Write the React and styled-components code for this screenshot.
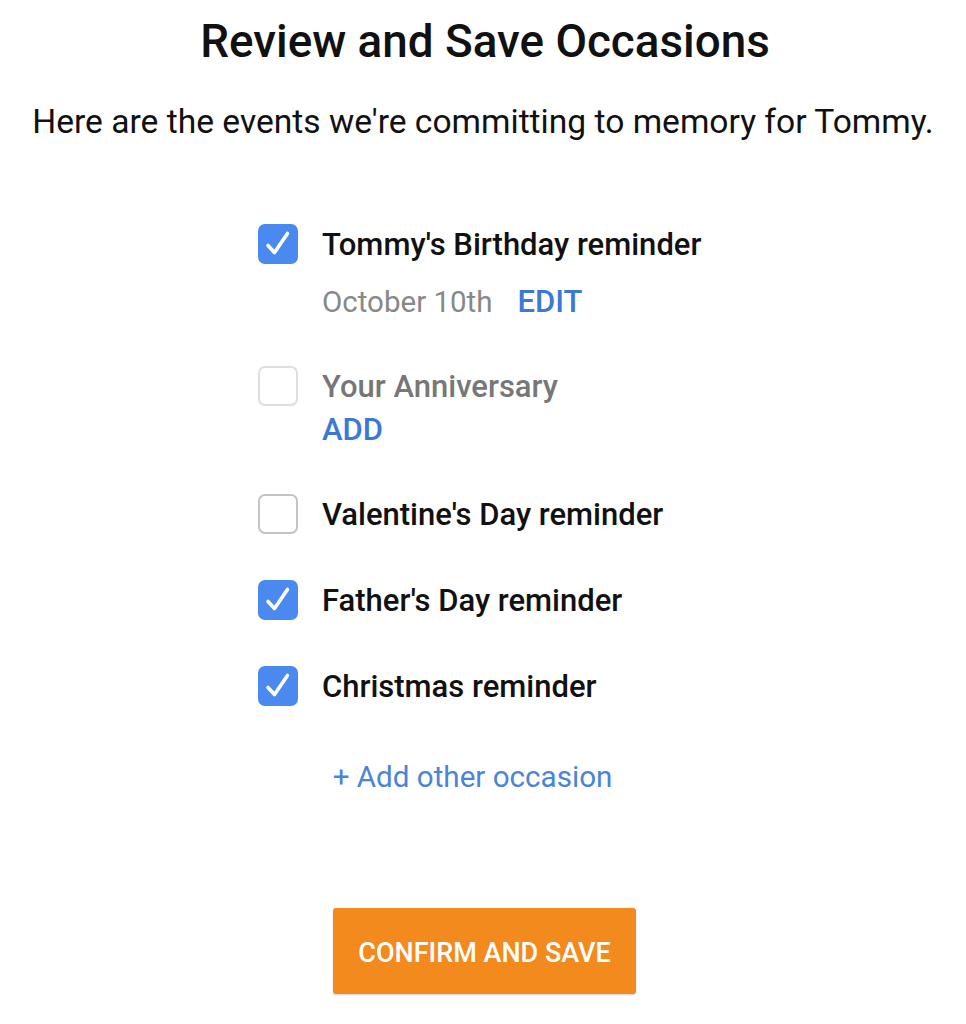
import styled, { createGlobalStyle } from "styled-components";

const GlobalStyle = createGlobalStyle`
  body {
    margin: 0;
    background: #ffffff;
    font-family: Roboto, "Liberation Sans", sans-serif;
    color: #111111;
  }
`;

const occasions = [
  { label: "Tommy's Birthday reminder", checked: true, date: "October 10th", action: "EDIT", gap: 16 },
  { label: "Your Anniversary", checked: false, faded: true, action: "ADD", gap: 2 },
  { label: "Valentine's Day reminder", checked: false },
  { label: "Father's Day reminder", checked: true },
  { label: "Christmas reminder", checked: true },
];

const App = () => {
  return (
    <>
      <GlobalStyle />
      <Page>
        <Title>Review and Save Occasions</Title>
        <Subtitle>Here are the events we're committing to memory for Tommy.</Subtitle>
        <List>
          {occasions.map((o) => (
            <Item key={o.label}>
              <Row>
                <Box checked={o.checked} faded={o.faded}>
                  {o.checked && (
                    <svg width="40" height="40" viewBox="0 0 40 40">
                      <path
                        d="M10 21.5 L16.5 28.5 L29.5 9.5"
                        fill="none"
                        stroke="#ffffff"
                        strokeWidth="3.6"
                        strokeLinecap="round"
                        strokeLinejoin="round"
                      />
                    </svg>
                  )}
                </Box>
                <Label faded={o.faded}>{o.label}</Label>
              </Row>
              {o.action && (
                <Meta gap={o.gap}>
                  {o.date && <DateText>{o.date}</DateText>}
                  <Action>{o.action}</Action>
                </Meta>
              )}
            </Item>
          ))}
        </List>
        <AddLink>+ Add other occasion</AddLink>
        <Button>CONFIRM AND SAVE</Button>
      </Page>
    </>
  );
};

const Page = styled.div`
  width: 966px;
  height: 1024px;
  display: flex;
  flex-direction: column;
  align-items: center;
  padding-top: 16px;
  box-sizing: border-box;
`;

const Title = styled.h1`
  margin: 0;
  font-size: 45.8px;
  font-weight: 500;
  line-height: 52px;
  color: #111;
  margin-left: 4px;
`;

const Subtitle = styled.p`
  margin: 34px 0 0;
  font-size: 33.6px;
  line-height: 40px;
  color: #111;
`;

const List = styled.div`
  width: 450px;
  margin-top: 80px;
  display: flex;
  flex-direction: column;
  gap: 42px;
`;

const Item = styled.div`
  display: flex;
  flex-direction: column;
`;

const Row = styled.div`
  display: flex;
  align-items: center;
  gap: 24px;
  height: 44px;
`;

const Box = styled.div`
  width: 40px;
  height: 40px;
  box-sizing: border-box;
  border-radius: 7px;
  display: flex;
  align-items: center;
  justify-content: center;
  flex-shrink: 0;
  overflow: hidden;
  background: ${(p) => (p.checked ? "#4a8af0" : "#ffffff")};
  border: ${(p) =>
    p.checked ? "none" : p.faded ? "2px solid #dedede" : "2px solid #c4c4c4"};
`;

const Label = styled.span`
  font-size: 31px;
  font-weight: 500;
  color: ${(p) => (p.faded ? "#777777" : "#111111")};
`;

const Meta = styled.div`
  display: flex;
  gap: 25px;
  padding-left: 64px;
  margin-top: ${(p) => p.gap}px;
  line-height: 40px;
`;

const DateText = styled.span`
  font-size: 29.5px;
  color: #888888;
`;

const Action = styled.span`
  font-size: 31px;
  font-weight: 500;
  color: #3b78d8;
`;

const AddLink = styled.div`
  margin-top: 49px;
  font-size: 29.6px;
  line-height: 40px;
  color: #4a84d8;
  margin-right: 21px;
`;

const Button = styled.button`
  margin-top: 111px;
  width: 303px;
  height: 86px;
  border: 0;
  border-radius: 3px;
  background: #f28a1e;
  color: #ffffff;
  font-family: Roboto, "Liberation Sans", sans-serif;
  font-size: 27px;
  font-weight: 500;
  padding-top: 4px;
  box-shadow: 0 1px 2px rgba(0, 0, 0, 0.2);
  margin-left: 3px;
`;

export default App;
